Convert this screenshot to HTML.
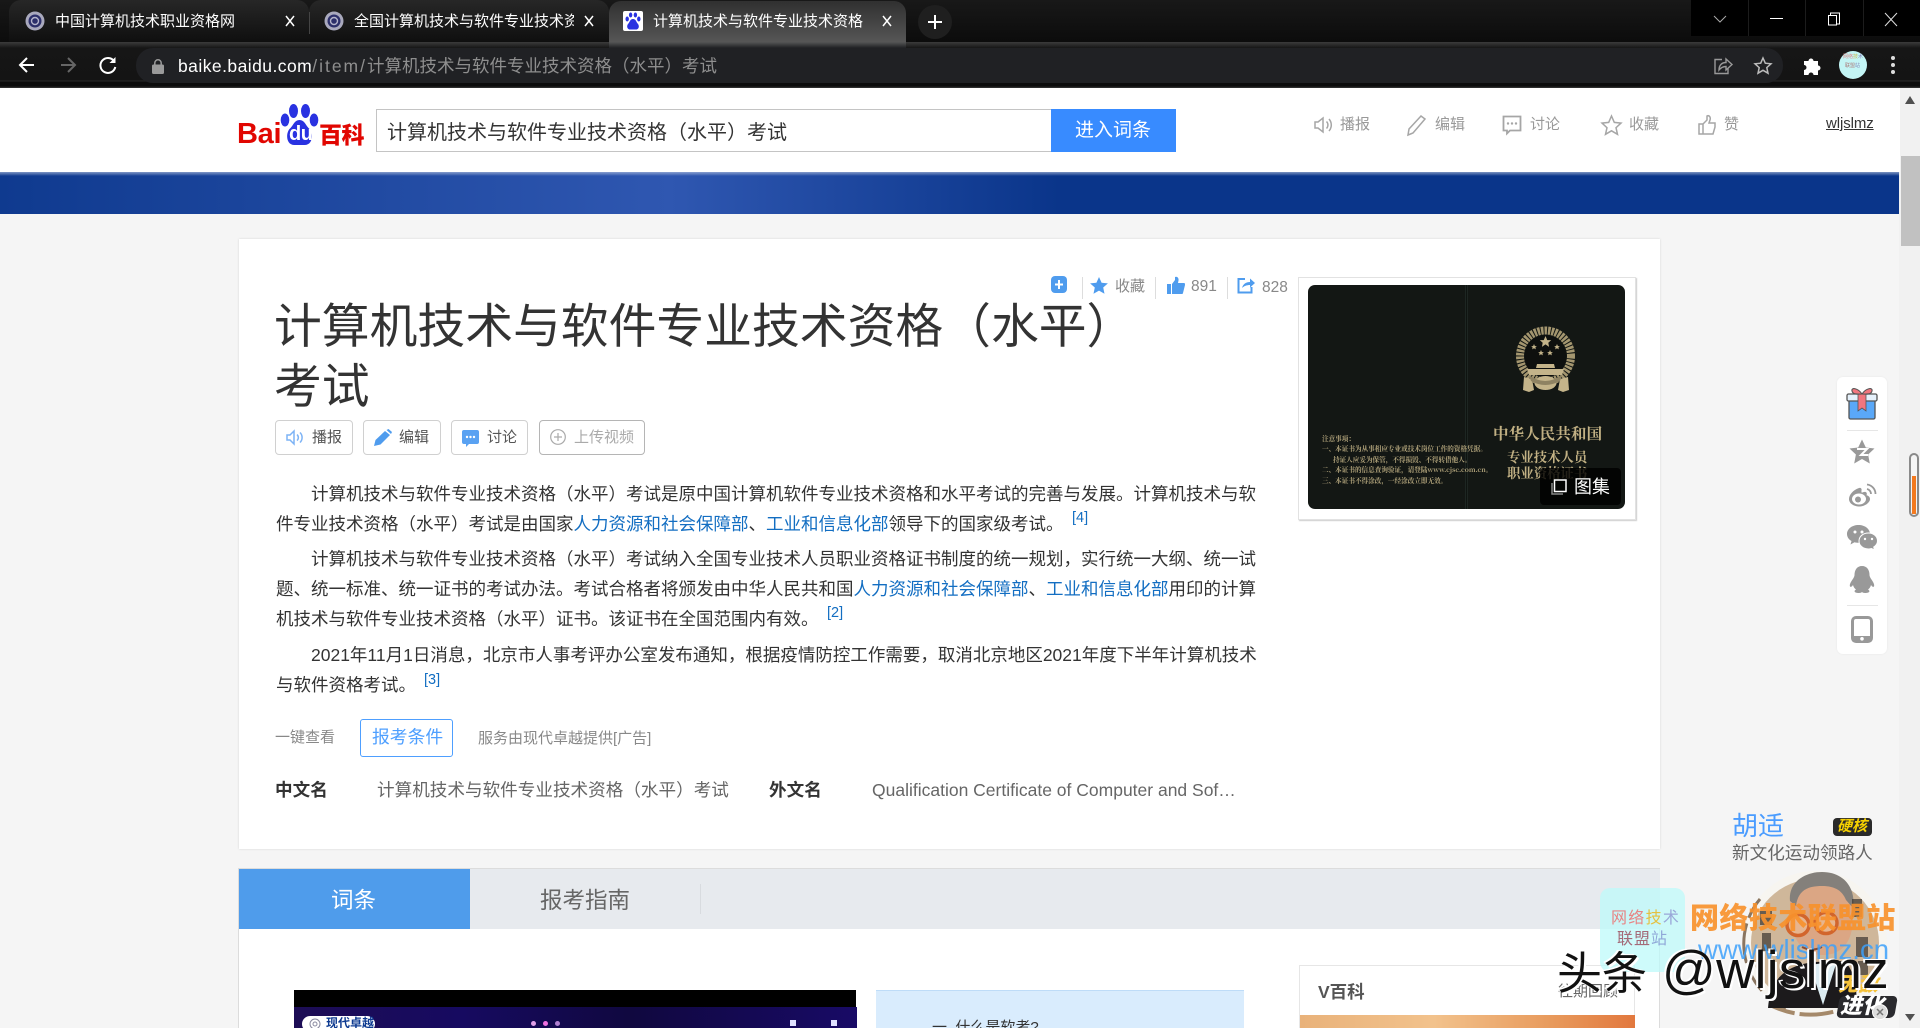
<!DOCTYPE html>
<html lang="zh-CN"><head><meta charset="utf-8"><title>计算机技术与软件专业技术资格（水平）考试</title>
<style>
html,body{margin:0;padding:0;width:1920px;height:1028px;overflow:hidden;background:#f5f5f5}
body{position:relative;font-family:"Liberation Sans","Noto Sans CJK SC",sans-serif;color:#333}
.a{position:absolute}
.t{position:absolute;white-space:nowrap;line-height:30px;height:30px}
.l{position:absolute;left:276px;width:980px;white-space:nowrap;font-size:17.5px;line-height:30px;height:30px;color:#333}
.j{text-align:justify;text-align-last:justify}
.l a{color:#136ec2;text-decoration:none}
.sup{position:absolute;font-size:14.5px;line-height:18px;color:#136ec2;white-space:nowrap}
.btn{position:absolute;top:420px;height:33px;border:1px solid #d0d0d0;border-radius:4px;box-sizing:content-box;background:#fff}
.g{font-size:15px;color:#999}
svg{position:absolute;overflow:visible}
.note{position:absolute;font-size:6.6px;line-height:8px;color:#b3a57c;white-space:nowrap;font-family:"Noto Serif CJK SC",serif;font-weight:700}
.gold{position:absolute;color:#c2b184;white-space:nowrap;font-family:"Noto Serif CJK SC",serif;font-weight:700;line-height:20px}
</style></head><body>

<!-- browser chrome -->
<div class="a" style="left:0;top:0;width:1920px;height:42px;background:linear-gradient(#181818,#0c0c0c)"></div>
<div class="a" style="left:9px;top:0;width:300px;height:42px;border-radius:12px 12px 0 0;background:linear-gradient(#272727,#0f0f0f)"></div>
<div class="a" style="left:309px;top:0;width:300px;height:42px;border-radius:12px 12px 0 0;background:linear-gradient(#272727,#0f0f0f)"></div>
<div class="a" style="left:309px;top:12px;width:1px;height:22px;background:#444"></div>
<div class="a" style="left:609px;top:1px;width:297px;height:41px;border-radius:12px 12px 0 0;background:linear-gradient(#303030,#565656)"></div>
<svg style="left:25px;top:11px" width="20" height="20" viewBox="0 0 20 20"><ellipse cx="10" cy="10" rx="9.500" ry="9.500" fill="#a9a9bd"/><circle cx="10" cy="10" r="6.500" fill="#2c2f6a"/><circle cx="10" cy="10" r="3.500" fill="none" stroke="#b5b5cc" stroke-width="1.400"/></svg>
<svg style="left:324px;top:11px" width="20" height="20" viewBox="0 0 20 20"><ellipse cx="10" cy="10" rx="9.500" ry="9.500" fill="#a9a9bd"/><circle cx="10" cy="10" r="6.500" fill="#2c2f6a"/><circle cx="10" cy="10" r="3.500" fill="none" stroke="#b5b5cc" stroke-width="1.400"/></svg>
<svg style="left:623px;top:11px" width="20" height="20" viewBox="0 0 20 20"><rect width="20" height="20" rx="2" fill="#fff"/><g fill="#2932e1"><ellipse cx="7.600" cy="4" rx="1.700" ry="2.500"/><ellipse cx="12.400" cy="4" rx="1.700" ry="2.500"/><ellipse cx="4.200" cy="8" rx="1.700" ry="2.500"/><ellipse cx="15.800" cy="8" rx="1.700" ry="2.500"/><path d="M10 8c-3 0-3 3-5 5-2 3 0 5.500 2 5.500h6c2 0 4-2.500 2-5.500-2-2-2-5-5-5z"/></g></svg>
<div class="t" style="left:55px;top:7px;font-size:15px;color:#fff">中国计算机技术职业资格网</div>
<div class="t" style="left:354px;top:7px;font-size:15px;color:#fff;width:220px;overflow:hidden">全国计算机技术与软件专业技术资格</div>
<div class="t" style="left:653px;top:7px;font-size:15px;color:#fff;width:210px;overflow:hidden">计算机技术与软件专业技术资格</div>
<svg style="left:285px;top:16px" width="10" height="10"><path d="M1 0l8 10M9 0l-8 10" stroke="#fff" stroke-width="1.500"/></svg>
<svg style="left:584px;top:16px" width="10" height="10"><path d="M1 0l8 10M9 0l-8 10" stroke="#fff" stroke-width="1.500"/></svg>
<svg style="left:882px;top:16px" width="10" height="10"><path d="M1 0l8 10M9 0l-8 10" stroke="#fff" stroke-width="1.500"/></svg>
<div class="a" style="left:918px;top:5px;width:34px;height:34px;border-radius:17px;background:#1f1f1f"></div>
<svg style="left:928px;top:15px" width="14" height="14"><path d="M7 0v14M0 7h14" stroke="#fff" stroke-width="2"/></svg>
<!-- window controls -->
<div class="a" style="left:1691px;top:0;width:229px;height:36px;background:#000"></div>
<div class="a" style="left:1748px;top:0;width:1px;height:36px;background:#1c1c1c"></div>
<div class="a" style="left:1805px;top:0;width:1px;height:36px;background:#1c1c1c"></div>
<div class="a" style="left:1863px;top:0;width:1px;height:36px;background:#1c1c1c"></div>
<svg style="left:1713px;top:15px" width="14" height="8"><path d="M1 1l6 6 6-6" fill="none" stroke="#aaa"/></svg>
<div class="a" style="left:1770px;top:18px;width:13px;height:1px;background:#fff"></div>
<svg style="left:1827px;top:12px" width="14" height="14"><path d="M3.500 3V1h9v11h-3" fill="none" stroke="#fff"/><rect x="1.500" y="3.500" width="8" height="9.500" fill="none" stroke="#fff"/></svg>
<svg style="left:1884px;top:12px" width="14" height="14"><path d="M1 1l12 13M13 1L1 14" stroke="#ddd"/></svg>
<!-- toolbar -->
<div class="a" style="left:0;top:42px;width:1920px;height:46px;background:linear-gradient(#3b3b3b,#161616 6px,#141414 38px,#2a2a2a 39px,#0c0c0c 40px,#0c0c0c 44px,#3a3a3a 46px)"></div>
<div class="a" style="left:609px;top:42px;width:297px;height:6px;background:linear-gradient(#565656,#202124)"></div>
<div class="a" style="left:136px;top:48px;width:1647px;height:35px;border-radius:17px;background:#202124"></div>
<svg style="left:18px;top:56px" width="18" height="18"><path d="M16 9H2M9 2L2 9l7 7" fill="none" stroke="#fff" stroke-width="2"/></svg>
<svg style="left:59px;top:56px" width="18" height="18"><path d="M2 9h14M9 2l7 7-7 7" fill="none" stroke="#666" stroke-width="2"/></svg>
<svg style="left:99px;top:56px" width="18" height="18"><path d="M15 5A7.500 7.500 0 1 0 16.300 11" fill="none" stroke="#fff" stroke-width="2"/><path d="M16.500 1v6h-6z" fill="#fff"/></svg>
<svg style="left:152px;top:59px" width="12" height="15"><rect y="5.500" width="12" height="9.500" rx="1.500" fill="#9a9a9a"/><path d="M2.800 6V4a3.200 3.200 0 0 1 6.400 0v2" fill="none" stroke="#9a9a9a" stroke-width="1.500"/></svg>
<div class="t" style="left:178px;top:51px;font-size:17.500px;color:#fff;letter-spacing:.45px">baike.baidu.com<span style="color:#8e8e8e;letter-spacing:2px">/item/</span><span style="color:#8e8e8e;letter-spacing:0">计算机技术与软件专业技术资格（水平）考试</span></div>
<svg style="left:1713px;top:56px" width="20" height="20"><path d="M9 3.500H2v14h13v-5" fill="none" stroke="#999" stroke-width="1.400"/><path d="M6 14c0-5 3-7.500 7-7.500V3l6 5.500-6 5.500v-3.500c-3 0-5 1-7 3.500z" fill="none" stroke="#999" stroke-width="1.400"/></svg>
<svg style="left:1754px;top:57px" width="18" height="18"><path d="M9 1l2.300 5.200 5.700.6-4.200 3.800 1.200 5.600-5-2.900-5 2.900 1.200-5.600L1 6.800l5.700-.6z" fill="none" stroke="#bbb" stroke-width="1.500"/></svg>
<svg style="left:1803px;top:56px" width="19" height="19" viewBox="0 0 19 19"><path d="M1 5h4.500a2.500 2.500 0 1 1 5 0H15v4.500a2.500 2.500 0 1 1 0 5V19h-4.500a2.500 2.500 0 1 0-5 0H1v-5a2.500 2.500 0 1 0 0-5z" fill="#fff"/></svg>
<div class="a" style="left:1839px;top:51px;width:28px;height:28px;border-radius:14px;background:#c3f5f5"></div>
<div class="t" style="left:1843px;top:54px;font-size:5px;line-height:7px;height:7px;color:#d88">网络<span style="color:#cb5">技</span><span style="color:#88b">术</span></div>
<div class="t" style="left:1845px;top:63px;font-size:5px;line-height:7px;height:7px;color:#a77">联盟<span style="color:#88b">站</span></div>
<svg style="left:1890px;top:56px" width="6" height="18"><circle cx="3" cy="2" r="2" fill="#ddd"/><circle cx="3" cy="9" r="2" fill="#ddd"/><circle cx="3" cy="16" r="2" fill="#ddd"/></svg>

<!-- page scrollbar -->
<div class="a" style="left:1899px;top:88px;width:21px;height:940px;background:#f1f1f1"></div>
<div class="a" style="left:1901px;top:156px;width:19px;height:90px;background:#c1c1c1"></div>
<svg style="left:1905px;top:96px" width="10" height="8"><path d="M5 0l5 8H0z" fill="#505050"/></svg>
<svg style="left:1905px;top:1014px" width="10" height="7"><path d="M5 7l5-7H0z" fill="#505050"/></svg>

<!-- site header -->
<div class="a" style="left:0;top:88px;width:1900px;height:84px;background:#fff"></div>
<div class="a" style="left:0;top:172px;width:1899px;height:42px;background:linear-gradient(90deg,#0f3a8f 0,#2f57b1 670px,#0a358a 1060px,#0a358a 1900px)"></div>
<div class="a" style="left:0;top:172px;width:1899px;height:4px;background:linear-gradient(rgba(200,210,230,.6),rgba(200,210,230,0))"></div>
<!-- logo -->
<div class="t" style="left:237px;top:119px;font-size:29px;font-weight:700;color:#e10601;letter-spacing:-.3px">Bai</div>
<svg style="left:280px;top:103px" width="42" height="44" viewBox="0 0 42 44"><g fill="#2932e1"><ellipse cx="13.500" cy="8" rx="4.500" ry="7"/><ellipse cx="25.500" cy="8" rx="4.500" ry="7"/><ellipse cx="5" cy="17" rx="4.300" ry="6.500"/><ellipse cx="34" cy="17" rx="4.300" ry="6.500"/><path d="M19.500 17c-5 0-6 5-9 8-5 4-5 17 4 17h10c9 0 9-13 4-17-3-3-4-8-9-8z"/></g></svg>
<div class="t" style="left:289px;top:119px;font-size:20px;font-weight:700;color:#fff;letter-spacing:-.5px">du</div>
<div class="t" style="left:319px;top:118px;font-size:23px;font-weight:900;color:#e10601;font-family:'Noto Sans CJK SC',sans-serif;letter-spacing:-.5px">百科</div>
<!-- search -->
<div class="a" style="left:376px;top:109px;width:676px;height:41px;border:1px solid #c4c4c4;background:#fff"></div>
<div class="t" style="left:387px;top:118px;font-size:20px;color:#333">计算机技术与软件专业技术资格（水平）考试</div>
<div class="a" style="left:1051px;top:109px;width:125px;height:43px;background:#388bff"></div>
<div class="t" style="left:1075px;top:116px;font-size:19px;color:#fff">进入词条</div>
<!-- nav -->
<svg style="left:1313px;top:115px" width="20" height="20" fill="none" stroke="#a6a6a6" stroke-width="1.500"><path d="M2 7v6h3l5 4V3L5 7z"/><path d="M13.500 6.500a5 5 0 0 1 0 7M16 4a9 9 0 0 1 0 12"/></svg>
<div class="t g" style="left:1340px;top:110px">播报</div>
<svg style="left:1406px;top:114px" width="22" height="23" fill="none" stroke="#a6a6a6" stroke-width="1.500"><path d="M2 21l1-6L15 2l4 3L7 19z"/></svg>
<div class="t g" style="left:1435px;top:110px">编辑</div>
<svg style="left:1502px;top:115px" width="20" height="20"><path d="M1.500 1.500h17v14H8l-3 3v-3H1.500z" fill="none" stroke="#a6a6a6" stroke-width="1.800"/><circle cx="6" cy="8.500" r="1.200" fill="#a6a6a6"/><circle cx="10" cy="8.500" r="1.200" fill="#a6a6a6"/><circle cx="14" cy="8.500" r="1.200" fill="#a6a6a6"/></svg>
<div class="t g" style="left:1530px;top:110px">讨论</div>
<svg style="left:1601px;top:115px" width="21" height="20"><path d="M10.500 1l2.800 6.400 6.700.7-5 4.600 1.500 6.600-6-3.500-6 3.500 1.500-6.600-5-4.600 6.700-.7z" fill="none" stroke="#a6a6a6" stroke-width="1.500"/></svg>
<div class="t g" style="left:1629px;top:110px">收藏</div>
<svg style="left:1698px;top:114px" width="19" height="21" fill="none" stroke="#a6a6a6" stroke-width="1.500"><path d="M1 10h4v10H1zM5 10l4-4V2c2-1 4 1 3 4l-1 3h6v4l-2 7H5"/></svg>
<div class="t g" style="left:1724px;top:110px">赞</div>
<div class="t" style="left:1826px;top:109px;font-size:15px;color:#333;text-decoration:underline;letter-spacing:-.1px">wljslmz</div>

<!-- main card -->
<div class="a" style="left:239px;top:239px;width:1421px;height:610px;background:#fff;box-shadow:0 0 2px rgba(0,0,0,.14)"></div>
<!-- top actions -->
<div class="a" style="left:1051px;top:276px;width:16px;height:17px;border-radius:4px;background:#4f9cee"></div>
<svg style="left:1055px;top:280px" width="8" height="9"><path d="M4 0v9M0 4.500h8" stroke="#fff" stroke-width="2"/></svg>
<div class="a" style="left:1082px;top:277px;width:1px;height:22px;background:#ddd"></div>
<svg style="left:1090px;top:277px" width="18" height="17"><path d="M9 0l2.600 5.700 6.300.7-4.700 4.100 1.300 6.200L9 13.600l-5.500 3.100 1.300-6.200L.1 6.400l6.300-.7z" fill="#4f9cee"/></svg>
<div class="t g" style="left:1115px;top:272px;color:#888">收藏</div>
<div class="a" style="left:1155px;top:277px;width:1px;height:22px;background:#ddd"></div>
<svg style="left:1167px;top:276px" width="18" height="18"><path d="M0 8h4v10H0zM5 8l3-4V1c2-1 4 1 3.500 3.500L11 7h6c1 0 1 1 1 2l-2 8c0 .6-.5 1-1 1H5z" fill="#4f9cee"/></svg>
<div class="t" style="left:1191px;top:272px;font-size:15.500px;color:#888">891</div>
<div class="a" style="left:1227px;top:277px;width:1px;height:22px;background:#ddd"></div>
<svg style="left:1237px;top:276px" width="19" height="18" fill="none" stroke="#4f9cee" stroke-width="2"><path d="M8 3H1.500v13.500h13V11"/><path d="M5 12c1-4 4-6 8-6V2.500l5 4.500-5 4.500V9c-3 0-6 1-8 3z" fill="#4f9cee" stroke="none"/></svg>
<div class="t" style="left:1262px;top:273px;font-size:15.500px;color:#888">828</div>

<!-- title -->
<div class="t" style="left:274px;top:298px;font-size:47.800px;line-height:60px;height:60px;color:#333">计算机技术与软件专业技术资格（水平）</div>
<div class="t" style="left:274px;top:358px;font-size:47.800px;line-height:60px;height:60px;color:#333">考试</div>
<!-- buttons -->
<div class="btn" style="left:275px;width:76px"></div>
<div class="btn" style="left:363px;width:76px"></div>
<div class="btn" style="left:451px;width:75px"></div>
<div class="btn" style="left:539px;width:104px;border-color:#b5b5b5"></div>
<svg style="left:286px;top:430px" width="18" height="15" fill="none" stroke="#7db3f5" stroke-width="1.500"><path d="M1 5v5h3l4 4V1L4 5z"/><path d="M11 4.500a4 4 0 0 1 0 6M14 2.500a7 7 0 0 1 0 10"/></svg>
<div class="t" style="left:312px;top:423px;font-size:15px;color:#555">播报</div>
<svg style="left:374px;top:429px" width="18" height="17"><path d="M0 17l1.500-6L11 2l5 4-9.500 9.500z" fill="#4f9cee"/><path d="M12.500 1l2-1 3.500 3-1 2z" fill="#4f9cee"/></svg>
<div class="t" style="left:399px;top:423px;font-size:15px;color:#555">编辑</div>
<svg style="left:462px;top:430px" width="17" height="18"><path d="M2 0h13a2 2 0 0 1 2 2v10a2 2 0 0 1-2 2H7l-3 3v-3H2a2 2 0 0 1-2-2V2a2 2 0 0 1 2-2z" fill="#5aa2f2"/><circle cx="5" cy="7" r="1.200" fill="#fff"/><circle cx="8.500" cy="7" r="1.200" fill="#fff"/><circle cx="12" cy="7" r="1.200" fill="#fff"/></svg>
<div class="t" style="left:487px;top:423px;font-size:15px;color:#555">讨论</div>
<svg style="left:550px;top:429px" width="16" height="16" fill="none" stroke="#aaa" stroke-width="1.200"><circle cx="8" cy="8" r="7.300"/><path d="M8 4v8M4 8h8"/></svg>
<div class="t" style="left:574px;top:423px;font-size:15px;color:#aaa">上传视频</div>

<!-- paragraphs -->
<div class="l j" style="top:479px;padding-left:35px;width:945px">计算机技术与软件专业技术资格（水平）考试是原中国计算机软件专业技术资格和水平考试的完善与发展。计算机技术与软</div>
<div class="l" style="top:509px">件专业技术资格（水平）考试是由国家<a>人力资源和社会保障部</a>、<a>工业和信息化部</a>领导下的国家级考试。</div>
<div class="sup" style="left:1072px;top:509px">[4]</div>
<div class="l j" style="top:544px;padding-left:35px;width:945px">计算机技术与软件专业技术资格（水平）考试纳入全国专业技术人员职业资格证书制度的统一规划，实行统一大纲、统一试</div>
<div class="l j" style="top:574px">题、统一标准、统一证书的考试办法。考试合格者将颁发由中华人民共和国<a>人力资源和社会保障部</a>、<a>工业和信息化部</a>用印的计算</div>
<div class="l" style="top:604px">机技术与软件专业技术资格（水平）证书。该证书在全国范围内有效。</div>
<div class="sup" style="left:827px;top:604px">[2]</div>
<div class="l j" style="top:640px;padding-left:35px;width:945px">2021年11月1日消息，北京市人事考评办公室发布通知，根据疫情防控工作需要，取消北京地区2021年度下半年计算机技术</div>
<div class="l" style="top:670px">与软件资格考试。</div>
<div class="sup" style="left:424px;top:671px">[3]</div>

<!-- quick view -->
<div class="t" style="left:275px;top:723px;font-size:15px;color:#888">一键查看</div>
<div class="a" style="left:360px;top:719px;width:91px;height:36px;border:1px solid #4e9fff;border-radius:3px"></div>
<div class="t" style="left:372px;top:722px;font-size:17.800px;color:#4e9fff">报考条件</div>
<div class="t" style="left:478px;top:724px;font-size:15px;color:#888">服务由现代卓越提供[广告]</div>
<!-- basic info -->
<div class="t" style="left:275px;top:775px;font-size:17.600px;font-weight:700;color:#333">中文名</div>
<div class="t" style="left:377px;top:775px;font-size:17.600px;color:#666">计算机技术与软件专业技术资格（水平）考试</div>
<div class="t" style="left:769px;top:775px;font-size:17.600px;font-weight:700;color:#333">外文名</div>
<div class="t" style="left:872px;top:775px;font-size:17.500px;color:#666">Qualification Certificate of Computer and Sof…</div>

<!-- certificate image -->
<div class="a" style="left:1298px;top:277px;width:336px;height:241px;background:#fff;border:1px solid #e2e2e2;box-shadow:1px 1px 1px #ccc"></div>
<div class="a" style="left:1308px;top:285px;width:317px;height:224px;border-radius:7px;background:#131714"></div>
<div class="a" style="left:1465px;top:285px;width:3px;height:224px;background:linear-gradient(90deg,#27332d,#0a0d0b,#27332d)"></div>
<svg style="left:1515px;top:327px" width="62" height="66" viewBox="0 0 62 66" fill="#c4b48a">
<circle cx="30.500" cy="29" r="25.500" fill="none" stroke="#a4966f" stroke-width="8" stroke-dasharray="2.500 1"/>
<circle cx="30.500" cy="29" r="21" fill="#0e100e"/>
<path transform="translate(30.500 15) scale(6)" d="M0-1 .29-.31 .95-.31 .47.12 .59.81 0 .4-.59.81-.47.12-.95-.31-.29-.31z"/>
<path transform="translate(19 20) scale(3)" d="M0-1 .29-.31 .95-.31 .47.12 .59.81 0 .4-.59.81-.47.12-.95-.31-.29-.31z"/>
<path transform="translate(42 20) scale(3)" d="M0-1 .29-.31 .95-.31 .47.12 .59.81 0 .4-.59.81-.47.12-.95-.31-.29-.31z"/>
<path transform="translate(26 26) scale(3)" d="M0-1 .29-.31 .95-.31 .47.12 .59.81 0 .4-.59.81-.47.12-.95-.31-.29-.31z"/>
<path transform="translate(35 26) scale(3)" d="M0-1 .29-.31 .95-.31 .47.12 .59.81 0 .4-.59.81-.47.12-.95-.31-.29-.31z"/>
<path d="M22 37h17l1 4H21zM12 42h37l-2 6H14z"/>
<ellipse cx="30.500" cy="56" rx="11" ry="7"/>
<path d="M9 50l8 2 2 11-5 2-6-2zM53 50l-8 2-2 11 5 2 6-2z"/>
<path d="M14 48q16 12 33 0l-2 6q-15 8-29 0z" fill="#8e8262"/>
</svg>
<div class="gold" style="left:1493px;top:423px;font-size:15.500px;letter-spacing:.1px">中华人民共和国</div>
<div class="gold" style="left:1507px;top:447px;font-size:13.400px">专业技术人员</div>
<div class="gold" style="left:1507px;top:463px;font-size:13.400px">职业资格证书</div>
<div class="note" style="left:1322px;top:434px">注意事项：</div>
<div class="note" style="left:1322px;top:444px">一、本证书为从事相应专业或技术岗位工作的资格凭据。</div>
<div class="note" style="left:1333px;top:455px">持证人应妥为保管，不得损毁、不得转借他人。</div>
<div class="note" style="left:1322px;top:465px">二、本证书的信息查询验证，请登陆www.cjsc.com.cn。</div>
<div class="note" style="left:1322px;top:476px">三、本证书不得涂改，一经涂改立即无效。</div>
<div class="a" style="left:1540px;top:468px;width:81px;height:37px;border-radius:4px;background:rgba(0,0,0,.82)"></div>
<svg style="left:1551px;top:479px" width="16" height="16"><path d="M1 4v11h11" fill="none" stroke="#888" stroke-width="1.500"/><rect x="3.500" y="1" width="11.500" height="11.500" fill="none" stroke="#fff" stroke-width="1.500"/></svg>
<div class="t" style="left:1574px;top:472px;font-size:18px;color:#fff">图集</div>

<!-- tabs + content -->
<div class="a" style="left:238px;top:868px;width:1422px;height:170px;background:#fff;border:1px solid #dcdcdc;box-sizing:border-box"></div>
<div class="a" style="left:239px;top:869px;width:1421px;height:60px;background:#e7eaee"></div>
<div class="a" style="left:239px;top:869px;width:231px;height:60px;background:#4f9ceb"></div>
<div class="t" style="left:331px;top:886px;font-size:22.500px;color:#fff">词条</div>
<div class="t" style="left:540px;top:886px;font-size:22.500px;color:#666">报考指南</div>
<div class="a" style="left:700px;top:884px;width:1px;height:30px;background:#d8dbdf"></div>
<!-- video -->
<div class="a" style="left:294px;top:990px;width:562px;height:17px;background:#000"></div>
<div class="a" style="left:294px;top:1007px;width:563px;height:21px;background:linear-gradient(90deg,#1d0d55,#160a60 30%,#10083f 60%,#180a66)"></div>
<div class="a" style="left:302px;top:1016px;width:73px;height:16px;border-radius:8px;background:#fff"></div>
<svg style="left:309px;top:1018px" width="12" height="12" fill="none" stroke="#8a8aa0"><circle cx="6" cy="6" r="5"/><circle cx="6" cy="6" r="2"/></svg>
<div class="t" style="left:326px;top:1013px;font-size:12px;line-height:20px;height:15px;overflow:hidden;color:#0d3a90;font-weight:700">现代卓越</div>
<div class="a" style="left:531px;top:1021px;width:5px;height:5px;border-radius:3px;background:#e0a0e8"></div>
<div class="a" style="left:543px;top:1021px;width:5px;height:5px;border-radius:3px;background:#f070e0"></div>
<div class="a" style="left:555px;top:1021px;width:5px;height:5px;border-radius:3px;background:#b080d0"></div>
<div class="a" style="left:790px;top:1020px;width:6px;height:6px;background:#dfe0ff"></div>
<div class="a" style="left:831px;top:1020px;width:6px;height:6px;background:#dfe0ff"></div>
<!-- catalog box -->
<div class="a" style="left:876px;top:990px;width:368px;height:40px;background:#d9ecfd;border-top:1px solid #bedcf8"></div>
<div class="t" style="left:932px;top:1013px;font-size:15px;color:#333">一&nbsp;&nbsp;什么是软考?</div>
<!-- V baike -->
<div class="a" style="left:1299px;top:965px;width:336px;height:63px;background:#fff;border:1px solid #e6e6e6;border-bottom:0;box-sizing:border-box"></div>
<div class="t" style="left:1318px;top:977px;font-size:17.500px;font-weight:700;color:#555">V百科</div>
<div class="t" style="left:1558px;top:977px;font-size:15px;color:#666">往期回顾</div>
<div class="a" style="left:1300px;top:1015px;width:335px;height:13px;background:linear-gradient(90deg,#e9b27a,#f2c28c 40%,#e89a5c 75%,#e2783e)"></div>

<!-- sidebar share -->
<div class="a" style="left:1837px;top:377px;width:50px;height:277px;border-radius:6px;background:#fff;box-shadow:0 0 2px rgba(0,0,0,.06)"></div>
<svg style="left:1846px;top:387px" width="32" height="33" viewBox="0 0 32 33"><rect x="3" y="10" width="26" height="22" rx="1.500" fill="#5aa8f8" stroke="#555" stroke-width="1.300"/><rect x="1" y="7" width="30" height="7" rx="1.500" fill="#e6f1fb" stroke="#555" stroke-width="1.300"/><path d="M12 7h8v17l-4-3-4 3z" fill="#f2767e" stroke="#555" stroke-width=".8"/><path d="M16 7C12 1 5 0 6 4s6 3 10 3zM16 7c4-6 11-7 10-3s-6 3-10 3z" fill="#f2767e" stroke="#555" stroke-width="1.100"/></svg>
<div class="a" style="left:1847px;top:430px;width:31px;height:1px;background:#e6e6e6"></div>
<svg style="left:1849px;top:439px" width="26" height="26" viewBox="0 0 26 26"><path d="M13 .5l3.800 8 8.700 1-6.400 6 1.700 9-7.800-4.500-7.800 4.500 1.700-9-6.400-6 8.700-1z" fill="#999"/><path d="M8 10h10l-6 6h7" fill="none" stroke="#fff" stroke-width="2"/></svg>
<svg style="left:1848px;top:483px" width="28" height="24" viewBox="0 0 28 24"><path d="M11 5C5 7 1 12 1 16c0 5 6 7.500 10 7.500 6 0 11-4 11-7.500 0-2.500-2.500-3.500-3.500-3.700 1.200-3-1-4-3.500-3-2 1-1.500-.5-1.500-2C14 6 13 4.300 11 5z" fill="#999"/><ellipse cx="11" cy="16" rx="7" ry="5.500" fill="#fff"/><circle cx="10" cy="16.500" r="3" fill="#999"/><path d="M19 6a5 5 0 0 1 4 5M19 1.500A9.500 9.500 0 0 1 27.500 11" fill="none" stroke="#999" stroke-width="1.800"/></svg>
<svg style="left:1847px;top:525px" width="31" height="25" viewBox="0 0 31 25"><path d="M11.500 0C5 0 0 4 0 9c0 3 1.800 5.500 4.500 7l-1 3.500 4-2.200c1 .3 2.500.5 4 .5C18 18 23 14 23 9s-5-9-11.500-9z" fill="#999"/><circle cx="8" cy="7" r="1.500" fill="#fff"/><circle cx="15" cy="7" r="1.500" fill="#fff"/><path d="M21.500 8c-5.500 0-9.500 3.500-9.500 8s4 8 9.500 8c1 0 2-.2 3-.5l3 1.500-.8-3c2.400-1.500 3.800-3.500 3.800-6 0-4.500-4-8-9-8z" fill="#999" stroke="#fff"/><circle cx="18" cy="14" r="1.200" fill="#fff"/><circle cx="25" cy="14" r="1.200" fill="#fff"/></svg>
<svg style="left:1849px;top:566px" width="26" height="27" viewBox="0 0 26 27"><path d="M13 0c-5 0-7.500 4-7.500 9 0 1-.5 2-1 3C3 14.500 0 18 1 20.500c.8 1 2 0 3-1.500.5 2 1.500 3.500 3 4.500C5 24.500 4.500 27 10 27c1.500 0 2.500-.5 3-1 .5.500 1.500 1 3 1 5.500 0 5-2.500 3-3.500 1.500-1 2.500-2.500 3-4.500 1 1.500 2.200 2.500 3 1.500 1-2.500-2-6-3.500-8.500-.5-1-1-2-1-3 0-5-2.500-9-7.500-9z" fill="#999"/></svg>
<div class="a" style="left:1847px;top:605px;width:31px;height:1px;background:#e6e6e6"></div>
<svg style="left:1851px;top:616px" width="22" height="27" viewBox="0 0 22 27"><rect x="1.500" y="1.500" width="19" height="24" rx="3.500" fill="#fff" stroke="#999" stroke-width="3"/><rect x="1" y="20" width="20" height="6" rx="2" fill="#999"/><circle cx="11" cy="22.800" r="1.800" fill="#fff"/></svg>
<!-- right slider -->
<div class="a" style="left:1909px;top:453px;width:10px;height:64px;border-radius:5px;border:2px solid #8a8a8a;background:#f5f5f5;box-sizing:border-box"></div>
<div class="a" style="left:1912px;top:476px;width:4px;height:38px;background:#f47a1f"></div>

<!-- hu shi ad -->
<div class="t" style="left:1732px;top:811px;font-size:26px;color:#4a9cff">胡适</div>
<div class="a" style="left:1833px;top:818px;width:39px;height:18px;border-radius:4px;background:#2a2a2a"></div>
<div class="t" style="left:1837px;top:812px;font-size:15px;color:#f6d000;font-weight:700;font-style:italic">硬核</div>
<div class="t" style="left:1732px;top:838px;font-size:17.600px;color:#666">新文化运动领路人</div>
<svg style="left:1730px;top:865px" width="170" height="160" viewBox="0 0 170 160">
<circle cx="85" cy="78" r="72" fill="#f7f5f0"/>
<path d="M30 34a70 70 0 0 0 26 109" fill="none" stroke="#8a7560" stroke-width="3" stroke-dasharray="22 6 40 10"/>
<path d="M40 140q45 22 95-6" fill="none" stroke="#a5896a" stroke-width="4" stroke-dasharray="26 5 34 8"/>
<circle cx="85" cy="78" r="64" fill="#cfb79a"/>
<path d="M38 143c2-26 14-42 46-46l30-1c10 8 14 28 12 47z" fill="#1c1a1c"/>
<path d="M80 100l13 40 14-44z" fill="#dcecf2"/>
<path d="M60 40C60 20 78 8 94 8c18 0 30 14 29 44 0 26-12 38-30 38-20 0-33-14-33-50z" fill="#dba684"/>
<path d="M60 36C58 18 74 7 92 7c22 0 34 16 31 36l-7-8c-4-10-12-14-24-14-14 0-24 4-26 20z" fill="#84807b"/>
<ellipse cx="68" cy="60" rx="11" ry="10.500" fill="#e7b58f" stroke="#d2652c" stroke-width="3.500"/>
<ellipse cx="96" cy="58" rx="11" ry="10.500" fill="#e7b58f" stroke="#d2652c" stroke-width="3.500"/>
<path d="M72 82q10 5 20 0" fill="none" stroke="#8c4c30" stroke-width="2"/>
<g fill="#3a3530"><rect x="30" y="46" width="12" height="14" opacity=".7"/><rect x="32" y="68" width="9" height="18" opacity=".7"/><rect x="122" y="34" width="10" height="18" opacity=".7"/><rect x="126" y="72" width="12" height="20" opacity=".7"/><rect x="128" y="96" width="10" height="14" opacity=".7"/></g>
</svg>
<div class="a" style="left:1838px;top:996px;width:58px;height:22px;border-radius:5px;background:#2a2a2e;transform:skewX(-10deg)"></div>
<div class="t" style="left:1840px;top:991px;font-size:22px;color:#fff;font-weight:900;font-style:italic">进化</div>
<div class="t" style="left:1838px;top:970px;font-size:20px;color:#f5c23a;font-weight:900;font-style:italic">无敌</div>
<svg style="left:1872px;top:1004px" width="16" height="16"><circle cx="8" cy="8" r="7.500" fill="#ddd" stroke="#fff"/><path d="M5 5l6 6M11 5l-6 6" stroke="#777" stroke-width="1.500"/></svg>

<!-- watermarks -->
<div class="a" style="left:1600px;top:888px;width:85px;height:84px;border-radius:10px;background:rgba(190,250,250,.75)"></div>
<div class="t" style="left:1611px;top:904px;font-size:16px;letter-spacing:1.300px;color:#e88484">网络<span style="color:#e5c040">技</span><span style="color:#9aa8d8">术</span></div>
<div class="t" style="left:1617px;top:925px;font-size:16px;letter-spacing:1px;color:#a46a78">联盟<span style="color:#90a8d8">站</span></div>
<div class="t" style="left:1690px;top:898px;font-size:29px;line-height:36px;height:36px;letter-spacing:.4px;font-weight:900;color:rgba(247,145,45,.92);font-family:'Noto Sans CJK SC',sans-serif">网络技术联盟站</div>
<div class="t" style="left:1698px;top:932px;font-size:27.500px;line-height:36px;height:36px;color:rgba(60,160,250,.85)">www.wljslmz.cn</div>
<div class="t" style="left:1557px;top:946px;font-size:45px;line-height:56px;height:56px;color:#111;text-shadow:2px 2px 0 #fff,-2px -1px 0 #fff">头条</div>
<div class="t" style="left:1662px;top:940px;font-size:53px;line-height:62px;height:62px;color:#111;text-shadow:2px 2px 0 #fff,-2px -1px 0 #fff;letter-spacing:.3px">@wljslmz</div>
</body></html>
